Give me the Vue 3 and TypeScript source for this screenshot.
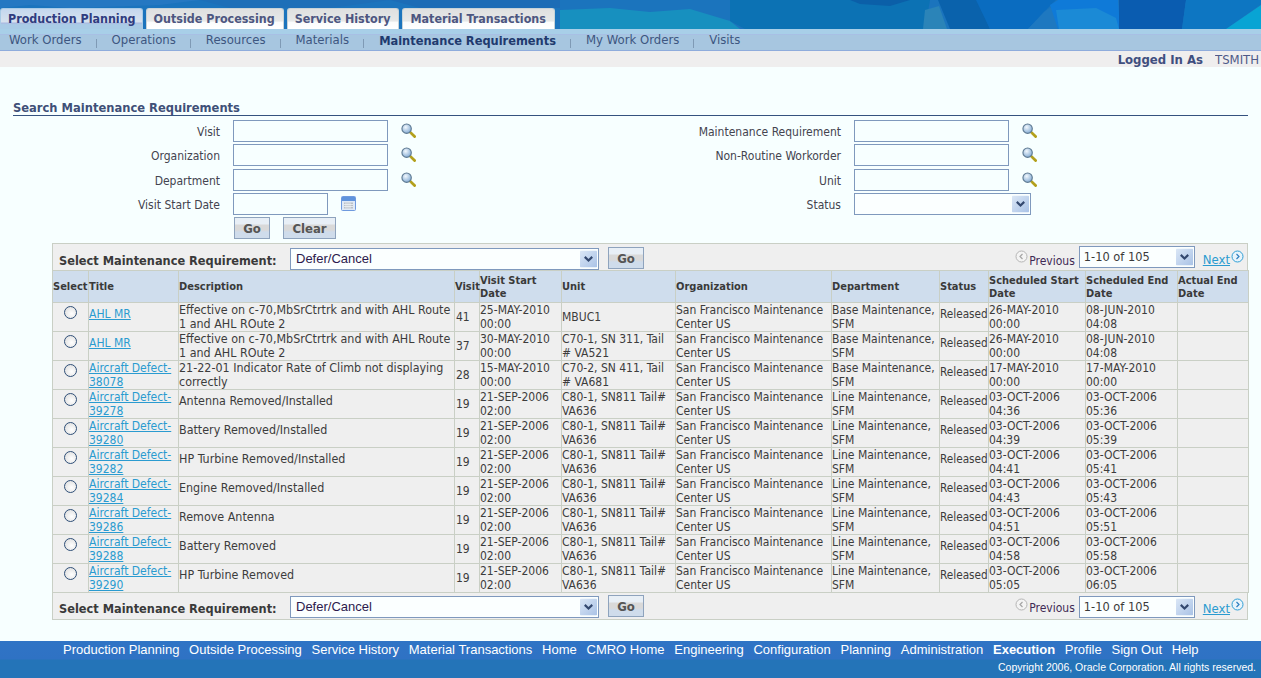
<script setup lang="ts">
interface Row { title: string; desc: string; visit: string; start: string; unit: string; dept: string; s: string; e: string }
const lm = 'Line Maintenance, SFM'
const bm = 'Base Maintenance, SFM'
const u = 'C80-1, SN811 Tail# VA636'
const sd = '21-SEP-2006 02:00'
const effective = 'Effective on c-70,MbSrCtrtrk and with AHL Route 1 and AHL ROute 2'
const rows: Row[] = [
  { title: 'AHL MR', desc: effective, visit: '41', start: '25-MAY-2010 00:00', unit: 'MBUC1', dept: bm, s: '26-MAY-2010 00:00', e: '08-JUN-2010 04:08' },
  { title: 'AHL MR', desc: effective, visit: '37', start: '30-MAY-2010 00:00', unit: 'C70-1, SN 311, Tail # VA521', dept: bm, s: '26-MAY-2010 00:00', e: '08-JUN-2010 04:08' },
  { title: 'Aircraft Defect-38078', desc: '21-22-01 Indicator Rate of Climb not displaying correctly', visit: '28', start: '15-MAY-2010 00:00', unit: 'C70-2, SN 411, Tail # VA681', dept: bm, s: '17-MAY-2010 00:00', e: '17-MAY-2010 00:00' },
  { title: 'Aircraft Defect-39278', desc: 'Antenna Removed/Installed', visit: '19', start: sd, unit: u, dept: lm, s: '03-OCT-2006 04:36', e: '03-OCT-2006 05:36' },
  { title: 'Aircraft Defect-39280', desc: 'Battery Removed/Installed', visit: '19', start: sd, unit: u, dept: lm, s: '03-OCT-2006 04:39', e: '03-OCT-2006 05:39' },
  { title: 'Aircraft Defect-39282', desc: 'HP Turbine Removed/Installed', visit: '19', start: sd, unit: u, dept: lm, s: '03-OCT-2006 04:41', e: '03-OCT-2006 05:41' },
  { title: 'Aircraft Defect-39284', desc: 'Engine Removed/Installed', visit: '19', start: sd, unit: u, dept: lm, s: '03-OCT-2006 04:43', e: '03-OCT-2006 05:43' },
  { title: 'Aircraft Defect-39286', desc: 'Remove Antenna', visit: '19', start: sd, unit: u, dept: lm, s: '03-OCT-2006 04:51', e: '03-OCT-2006 05:51' },
  { title: 'Aircraft Defect-39288', desc: 'Battery Removed', visit: '19', start: sd, unit: u, dept: lm, s: '03-OCT-2006 04:58', e: '03-OCT-2006 05:58' },
  { title: 'Aircraft Defect-39290', desc: 'HP Turbine Removed', visit: '19', start: sd, unit: u, dept: lm, s: '03-OCT-2006 05:05', e: '03-OCT-2006 06:05' },
]
const tabs = ['Production Planning', 'Outside Processing', 'Service History', 'Material Transactions']
const subs = ['Work Orders', 'Operations', 'Resources', 'Materials', 'Maintenance Requirements', 'My Work Orders', 'Visits']
const foot = ['Production Planning', 'Outside Processing', 'Service History', 'Material Transactions', 'Home', 'CMRO Home', 'Engineering', 'Configuration', 'Planning', 'Administration', 'Execution', 'Profile', 'Sign Out', 'Help']
const headers = ['Select', 'Title', 'Description', 'Visit', 'Visit Start Date', 'Unit', 'Organization', 'Department', 'Status', 'Scheduled Start Date', 'Scheduled End Date', 'Actual End Date']
</script>

<template>
  <div class="page">
    <header class="banner">
      <svg class="texture" viewBox="0 0 1261 29" preserveAspectRatio="none" aria-hidden="true">
        <path d="M0 0h200l-40 5-90 3-40-3L0 8z" fill="#2578c2" />
        <path d="M200 0h190l-60 8H230z" fill="#1d6fb8" />
        <path d="M390 0h170v8H420z" fill="#1c6cb6" />
        <path d="M560 10l50-2 40 4 40-3 40 12 10 8H560z" fill="#1790bf" />
        <path d="M730 0h200l-5 29H745l-15-8z" fill="#0c72b4" />
        <path d="M850 0h60l-20 6-30-2z" fill="#0b5fa8" />
        <path d="M925 10l14-4 8 23h-24z" fill="#2b84b8" />
        <path d="M938 0h40l12 29h-40z" fill="#0a62ac" />
        <path d="M976 0h80l-12 12-16 17h-38z" fill="#0a6cc0" />
        <path d="M1028 29l16-17 10-7 4 24z" fill="#1e78c0" />
        <path d="M1050 5l8-5h60l2 29h-62z" fill="#0f7ad8" />
        <path d="M1056 10l40-2 20 10 3 11h-60z" fill="#1b8ad6" />
        <path d="M1119 0h67l-4 29h-63z" fill="#0a5cb0" />
        <path d="M1186 0h75v4l-35 25h-44z" fill="#0d76c2" />
        <path d="M1226 29l35-24v24z" fill="#08a4d4" />
      </svg>
      <nav class="tabs">
        <a v-for="(t, i) in tabs" :key="t" class="tab" :class="{ active: i === 0 }">{{ t }}</a>
      </nav>
    </header>
    <nav class="subnav">
      <template v-for="(s, i) in subs" :key="s">
        <span v-if="i > 0" class="sep"></span>
        <a class="sub" :class="{ current: i === 4 }">{{ s }}</a>
      </template>
    </nav>
    <div class="userbar"><b>Logged In As</b><span>TSMITH</span></div>

    <main class="content">
      <h1 class="heading">Search Maintenance Requirements</h1>
      <form class="form">
        <label class="lab">Visit</label>
        <div class="field"><input class="inp" /><svg class="lens" viewBox="0 0 16 16"><use href="#lens-icon" /></svg></div>
        <label class="lab">Maintenance Requirement</label>
        <div class="field"><input class="inp" /><svg class="lens" viewBox="0 0 16 16"><use href="#lens-icon" /></svg></div>

        <label class="lab">Organization</label>
        <div class="field"><input class="inp" /><svg class="lens" viewBox="0 0 16 16"><use href="#lens-icon" /></svg></div>
        <label class="lab">Non-Routine Workorder</label>
        <div class="field"><input class="inp" /><svg class="lens" viewBox="0 0 16 16"><use href="#lens-icon" /></svg></div>

        <label class="lab">Department</label>
        <div class="field"><input class="inp" /><svg class="lens" viewBox="0 0 16 16"><use href="#lens-icon" /></svg></div>
        <label class="lab">Unit</label>
        <div class="field"><input class="inp" /><svg class="lens" viewBox="0 0 16 16"><use href="#lens-icon" /></svg></div>

        <label class="lab">Visit Start Date</label>
        <div class="field">
          <input class="inp short" />
          <svg class="cal" viewBox="0 0 15 15" aria-hidden="true">
            <rect x="0.5" y="0.5" width="14" height="14" rx="1" fill="#dfe9f6" stroke="#6f9ade" />
            <rect x="1" y="1" width="13" height="4" fill="#5f93dc" />
            <rect x="3" y="6.5" width="9" height="6" fill="#b9bfc6" />
            <path d="M3 8.5h9M3 10.5h9M5 6.5v6M7 6.5v6M9 6.5v6" stroke="#eef2f6" stroke-width="0.8" fill="none" />
          </svg>
        </div>
        <label class="lab">Status</label>
        <div class="field">
          <div class="sel status"><span class="arrow"><svg viewBox="0 0 16 16"><use href="#chev-icon" /></svg></span></div>
        </div>

        <span></span>
        <div class="field btns">
          <button type="button" class="btn go">Go</button>
          <button type="button" class="btn clear">Clear</button>
        </div>
      </form>

      <section class="panel">
        <div class="bar top">
          <b class="bar-label">Select Maintenance Requirement:</b>
          <div class="sel action">Defer/Cancel<span class="arrow"><svg viewBox="0 0 16 16"><use href="#chev-icon" /></svg></span></div>
          <button type="button" class="btn go barbtn">Go</button>
          <div class="pager">
            <svg class="pg-ic prev" viewBox="0 0 13 13"><circle cx="6.5" cy="6.5" r="5.5" fill="#f4f4f4" stroke="#b5b5b5" /><path d="M7.5 4L5 6.5 7.5 9" fill="none" stroke="#a5a5a5" stroke-width="1.2" /></svg>
            <span class="prevtxt">Previous</span>
            <div class="sel range">1-10 of 105<span class="arrow"><svg viewBox="0 0 16 16"><use href="#chev-icon" /></svg></span></div>
            <a class="next">Next</a>
            <svg class="pg-ic nextic" viewBox="0 0 13 13"><circle cx="6.5" cy="6.5" r="5.5" fill="#e8f4fb" stroke="#2f9fd6" /><path d="M5.5 4L8 6.5 5.5 9" fill="none" stroke="#2f7fc0" stroke-width="1.2" /></svg>
          </div>
        </div>
        <table class="grid">
          <colgroup>
            <col class="c1" /><col class="c2" /><col class="c3" /><col class="c4" /><col class="c5" /><col class="c6" />
            <col class="c7" /><col class="c8" /><col class="c9" /><col class="c10" /><col class="c11" /><col class="c12" />
          </colgroup>
          <thead>
            <tr><th v-for="h in headers" :key="h">{{ h }}</th></tr>
          </thead>
          <tbody>
            <tr v-for="(r, i) in rows" :key="i">
              <td class="radio-cell"><span class="radio"></span></td>
              <td :class="{ single: r.title.length < 10 }"><a class="link">{{ r.title }}</a></td>
              <td class="desc" :class="{ single: r.desc.length < 40 }">{{ r.desc }}</td>
              <td class="visit">{{ r.visit }}</td>
              <td>{{ r.start }}</td>
              <td>{{ r.unit }}</td>
              <td>San Francisco Maintenance Center US</td>
              <td>{{ r.dept }}</td>
              <td class="status-cell single">Released</td>
              <td>{{ r.s }}</td>
              <td>{{ r.e }}</td>
              <td></td>
            </tr>
          </tbody>
        </table>
        <div class="bar bottom">
          <b class="bar-label">Select Maintenance Requirement:</b>
          <div class="sel action">Defer/Cancel<span class="arrow"><svg viewBox="0 0 16 16"><use href="#chev-icon" /></svg></span></div>
          <button type="button" class="btn go barbtn">Go</button>
          <div class="pager">
            <svg class="pg-ic prev" viewBox="0 0 13 13"><circle cx="6.5" cy="6.5" r="5.5" fill="#f4f4f4" stroke="#b5b5b5" /><path d="M7.5 4L5 6.5 7.5 9" fill="none" stroke="#a5a5a5" stroke-width="1.2" /></svg>
            <span class="prevtxt">Previous</span>
            <div class="sel range">1-10 of 105<span class="arrow"><svg viewBox="0 0 16 16"><use href="#chev-icon" /></svg></span></div>
            <a class="next">Next</a>
            <svg class="pg-ic nextic" viewBox="0 0 13 13"><circle cx="6.5" cy="6.5" r="5.5" fill="#e8f4fb" stroke="#2f9fd6" /><path d="M5.5 4L8 6.5 5.5 9" fill="none" stroke="#2f7fc0" stroke-width="1.2" /></svg>
          </div>
        </div>
      </section>
    </main>

    <footer class="footer">
      <nav class="flinks">
        <a v-for="f in foot" :key="f" :class="{ strong: f === 'Execution' }">{{ f }}</a>
      </nav>
      <div class="copy">Copyright 2006, Oracle Corporation. All rights reserved.</div>
    </footer>

    <svg class="defs" width="0" height="0" aria-hidden="true">
      <defs>
        <radialGradient id="glass" cx="40%" cy="35%" r="70%">
          <stop offset="0" stop-color="#f2f8fd" />
          <stop offset="1" stop-color="#7fa8d2" />
        </radialGradient>
        <linearGradient id="chevbg" x1="0" y1="0" x2="1" y2="1">
          <stop offset="0" stop-color="#dbe7f6" />
          <stop offset="1" stop-color="#a9c2e6" />
        </linearGradient>
        <symbol id="lens-icon" viewBox="0 0 16 16">
          <path d="M10 10L14.5 14.5" stroke="#b3a01c" stroke-width="3" stroke-linecap="round" />
          <circle cx="6" cy="6" r="5" fill="url(#glass)" stroke="#5f7a92" stroke-width="1.2" />
        </symbol>
        <symbol id="chev-icon" viewBox="0 0 16 16">
          <rect x="0" y="0" width="16" height="16" rx="1" fill="url(#chevbg)" />
          <path d="M4.5 6L8 9.5 11.5 6" fill="none" stroke="#33486f" stroke-width="2" />
        </symbol>
      </defs>
    </svg>
  </div>
</template>

<style>
html, body { margin: 0; background: #f7ffff; }
</style>

<style scoped>
.page {
  width: 1261px;
  height: 678px;
  overflow: hidden;
  display: flex;
  flex-direction: column;
  background: #f7ffff;
  font-family: "DejaVu Sans Condensed", "DejaVu Sans", sans-serif;
  font-size: 12px;
  color: #3a3a3a;
}
.banner {
  position: relative;
  height: 29px;
  flex: none;
  background: #1b74bd;
}
.texture { position: absolute; inset: 0; width: 100%; height: 100%; }
.tabs { display: flex; height: 21px; position: absolute; left: 0; bottom: 0; gap: 3px; }
.tab {
  display: block;
  padding: 2px 8px 0 7px;
  font-weight: 700;
  font-size: 12.4px;
  line-height: 15px;
  color: #4d5680;
  background: linear-gradient(#dfe0e0 0, #e6e8e8 60%, #fafcfc 66%, #fff 100%);
  border: 1px solid #c7d3d8;
  border-bottom: 0;
  border-radius: 3px 3px 0 0;
  box-sizing: border-box;
  white-space: nowrap;
}
.tab.active {
  color: #2f3c80;
  background: linear-gradient(#c4d7ee 0, #d7e2ee 65%, #aab8e0 70%, #a9cbe6 78%, #a9cbe6 100%);
  border-color: #a9cbe6;
  padding-right: 6px;
}
.subnav {
  flex: none;
  height: 16px;
  padding-top: 5px;
  padding-left: 9px;
  display: flex;
  align-items: center;
  background: linear-gradient(#a8cfe8 0, #a8cfe8 5px, #a9b9e8 5px, #a7c6e0 6px);
  border-bottom: 1px solid #8facdc;
}
.sub { font-size: 13px; color: #3d5680; white-space: nowrap; line-height: 14px; margin-top: -4px; }
.sub.current { font-weight: 700; font-size: 12.7px; color: #1f3a6e; margin-top: -3px; }
.sep { width: 1px; height: 9px; background: #7f9ab5; margin: 2px 15px 0 14px; }
.userbar {
  flex: none;
  height: 16px;
  background: #efeeee;
  display: flex;
  justify-content: flex-end;
  gap: 12px;
  line-height: 18px;
  color: #4e5a88;
  white-space: nowrap;
}
.userbar b { color: #3f4f7f; font-size: 13px; }
.userbar span { width: 46px; overflow: hidden; font-size: 13px; }
.content { flex: 1; display: flex; flex-direction: column; padding: 33px 13px 0 0; }
.heading {
  margin: 0 0 4px 13px;
  height: 15px;
  font-size: 12.8px;
  line-height: 15px;
  font-weight: 700;
  color: #3f5078;
  border-bottom: 1px solid #35527f;
  white-space: nowrap;
}
.form {
  display: grid;
  grid-template-columns: 220px 389px 206px 1fr;
  column-gap: 13px;
  grid-auto-rows: 24.33px;
  height: 123px;
}
.lab { text-align: right; line-height: 24px; color: #44444f; white-space: nowrap; }
.field { display: flex; align-items: flex-start; }
.inp {
  width: 155px;
  height: 22px;
  box-sizing: border-box;
  border: 1px solid #7f99bd;
  background: #f7ffff;
  padding: 0;
  margin: 0;
}
.inp.short { width: 95px; }
.lens { width: 15px; height: 15px; margin: 3px 0 0 13px; }
.cal { width: 15px; height: 15px; margin: 3px 0 0 13px; }
.sel {
  position: relative;
  box-sizing: border-box;
  height: 22px;
  border: 1px solid #7f99bd;
  background: #fbffff;
  line-height: 20px;
  padding-left: 5px;
  color: #2c1a4d;
  white-space: nowrap;
}
.sel.status { width: 177px; }
.arrow {
  position: absolute;
  right: 1px;
  top: 1px;
  width: 17px;
  height: 18px;
  display: block;
}
.arrow svg { width: 100%; height: 100%; display: block; }
.btns { gap: 13px; padding-left: 1px; }
.btn {
  box-sizing: border-box;
  height: 22px;
  padding: 0;
  border: 1px solid #8ea3bd;
  background: linear-gradient(#e8eff6 0, #e8eff6 30%, #d9d9d9 35%, #d9d9d9 60%, #cfdceb 70%, #cfdceb 100%);
  font-family: inherit;
  font-weight: 700;
  font-size: 13px;
  color: #555;
}
.btn.go { width: 36px; }
.btn.clear { width: 53px; }
.panel {
  width: 1196px;
  margin-left: 52px;
  box-sizing: border-box;
}
.bar {
  box-sizing: border-box;
  height: 27px;
  display: flex;
  align-items: flex-start;
  background: #efefef;
  border: 1px solid #c9cfc5;
  border-bottom: 0;
}
.bar.bottom { border-top: 0; border-bottom: 1px solid #c9cfc5; }
.bar-label { margin-left: 6px; margin-top: 9px; width: 231px; font-size: 12.65px; line-height: 15px; color: #3a3a3a; white-space: nowrap; }
.bar.bottom .bar-label { margin-top: 8px; }
.sel.action { width: 309px; margin-top: 4px; font-family: "Liberation Sans", Arial, sans-serif; font-size: 13px; }
.bar.bottom .sel.action { margin-top: 3px; }
.barbtn { margin: 3px 0 0 9px; }
.bar.bottom .barbtn { margin-top: 2px; }
.pager { margin-left: auto; display: flex; align-items: flex-start; padding-right: 3px; }
.pg-ic { width: 13px; height: 13px; margin-top: 6px; }
.bar.bottom .pg-ic { margin-top: 5px; }
.prevtxt { margin: 10px 4px 0 1px; line-height: 15px; color: #3f2a55; }
.bar.bottom .prevtxt { margin-top: 8px; }
.sel.range { width: 116px; margin-top: 2px; padding-left: 4px; color: #3a3a3a; font-size: 12.7px; }
.bar.bottom .sel.range { margin-top: 3px; }
.next { margin: 8px 1px 0 8px; font-size: 13px; line-height: 15px; color: #2a9bd0; text-decoration: underline; }
.bar.bottom .next { margin-top: 8px; }
.grid {
  table-layout: fixed;
  width: 1196px;
  border-collapse: collapse;
  font-size: 12px;
  line-height: 14px;
}
.c1 { width: 36px; } .c2 { width: 90px; } .c3 { width: 276px; } .c4 { width: 25px; }
.c5 { width: 82px; } .c6 { width: 114px; } .c7 { width: 156px; } .c8 { width: 108px; }
.c9 { width: 49px; } .c10 { width: 97px; } .c11 { width: 92px; } .c12 { width: 71px; }
.grid th, .grid td {
  border: 1px solid #c9cfc5;
  padding: 0;
  vertical-align: middle;
  text-align: left;
  overflow: visible;
}
.grid th {
  height: 31px;
  background: #cfdded;
  font-weight: 700;
  color: #3a3a3a;
  line-height: 13px;
  font-size: 11px;
}
.grid td { height: 28px; background: #efefef; color: #3c3c3c; }
.grid td.desc { font-size: 12.4px; }
.grid td.single { vertical-align: top; padding-top: 4px; height: 24px; }
.grid td.visit { padding-left: 1px; }
.grid td.status-cell { font-size: 11.7px; }
.radio-cell { text-align: center !important; }
.radio {
  display: block;
  width: 13px;
  height: 13px;
  margin: -10px auto 0;
  box-sizing: border-box;
  border: 1px solid #2f4f78;
  border-radius: 50%;
  background: radial-gradient(circle at 60% 60%, #fff, #d9d9d9);
}
.link { color: #2a9bd0; text-decoration: underline; }
.footer {
  flex: none;
  height: 37px;
  background: linear-gradient(#2f74c5 0, #2f72c4 18px, #2474b8 19px, #2474b8 100%);
  color: #fff;
  font-family: "Liberation Sans", Arial, sans-serif;
}
.flinks { display: flex; gap: 9.75px; padding: 1px 0 0 63px; font-size: 13px; line-height: 16px; white-space: nowrap; }
.flinks .strong { font-weight: 700; }
.copy { text-align: right; padding-right: 5px; font-size: 10.5px; line-height: 12px; margin-top: 3px; }
.defs { position: absolute; }
</style>
